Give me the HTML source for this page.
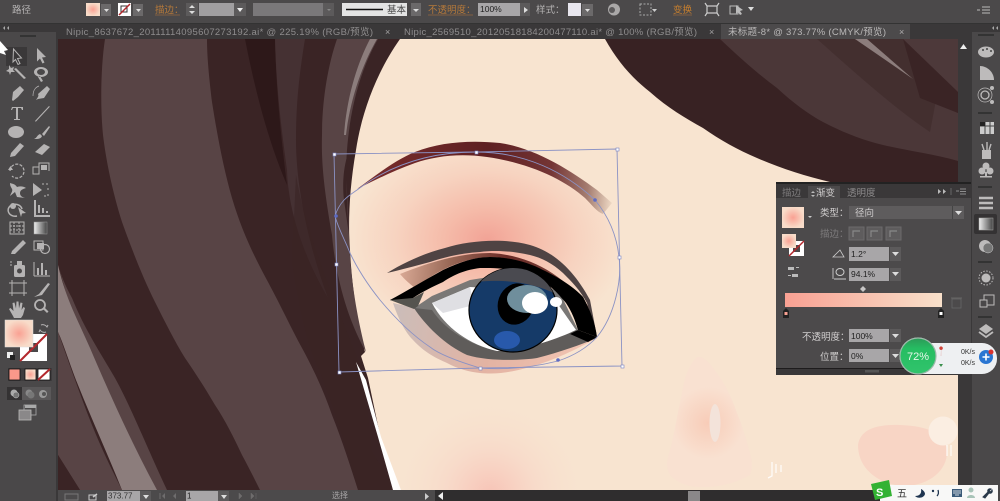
<!DOCTYPE html>
<html><head><meta charset="utf-8"><title>Illustrator</title>
<style>
html,body{margin:0;padding:0;width:1000px;height:501px;overflow:hidden;background:#4a4849}
svg{display:block;filter:blur(.35px);overflow:hidden}
text{font-family:"Liberation Sans","Noto Sans CJK SC",sans-serif}
</style></head><body>
<svg width="1000" height="501" viewBox="0 0 1000 501" xmlns="http://www.w3.org/2000/svg">
<defs>
<radialGradient id="blush" gradientUnits="userSpaceOnUse" cx="487" cy="240" r="140" gradientTransform="translate(487 240) scale(1 .75) translate(-487 -240)">
<stop offset="0" stop-color="#f2a396"/><stop offset=".3" stop-color="#f5bba9"/><stop offset=".65" stop-color="#f7d3c0"/><stop offset="1" stop-color="#f8e4d0"/></radialGradient>
<linearGradient id="brow" gradientUnits="userSpaceOnUse" x1="357" y1="180" x2="612" y2="205">
<stop offset="0" stop-color="#7a2d2c"/><stop offset=".5" stop-color="#5e2022"/><stop offset=".75" stop-color="#743535"/><stop offset=".9" stop-color="#a57d70"/><stop offset="1" stop-color="#efdac6"/></linearGradient>
<linearGradient id="crease" gradientUnits="userSpaceOnUse" x1="400" y1="270" x2="590" y2="290">
<stop offset="0" stop-color="#d9a995"/><stop offset=".25" stop-color="#9a6a58"/><stop offset=".55" stop-color="#6a2a26"/><stop offset="1" stop-color="#7c4a40"/></linearGradient>
<linearGradient id="under" gradientUnits="userSpaceOnUse" x1="395" y1="310" x2="590" y2="350">
<stop offset="0" stop-color="#cbbdb9"/><stop offset=".5" stop-color="#e3b3a3"/><stop offset="1" stop-color="#f2c4b2"/></linearGradient>
<radialGradient id="nose" gradientUnits="userSpaceOnUse" cx="708" cy="423" r="36"><stop offset="0" stop-color="#f8ccb8"/><stop offset="1" stop-color="#f9e1d1"/></radialGradient>
<radialGradient id="cheek" gradientUnits="userSpaceOnUse" cx="490" cy="495" r="100"><stop offset="0" stop-color="#f7c3b6"/><stop offset=".45" stop-color="#f8d8c8" stop-opacity=".8"/><stop offset="1" stop-color="#f8e4d0" stop-opacity="0"/></radialGradient>
<radialGradient id="sw"><stop offset="0" stop-color="#f9a193"/><stop offset="1" stop-color="#f8dcc9"/></radialGradient>
<linearGradient id="bar"><stop offset="0" stop-color="#f9a193"/><stop offset="1" stop-color="#f8e0ca"/></linearGradient>
<linearGradient id="gt"><stop offset="0" stop-color="#eee"/><stop offset="1" stop-color="#444"/></linearGradient>
<linearGradient id="green" x1="0" y1="0" x2="0" y2="1"><stop offset="0" stop-color="#2c9a58"/><stop offset=".3" stop-color="#26bd62"/><stop offset="1" stop-color="#31c46c"/></linearGradient>
<clipPath id="canvas"><rect x="58" y="39" width="900" height="451"/></clipPath>
<clipPath id="iris"><ellipse cx="513" cy="310" rx="44" ry="42"/></clipPath>
</defs>

<!-- CANVAS -->
<g clip-path="url(#canvas)">
<rect x="58" y="39" width="900" height="451" fill="#f8e4d0"/>
<path d="M335 216C340 200 350 195 357 190C390 165 430 152 476 152C525 152 565 172 595 200C610 218 617 238 619 257C622 280 615 315 597 337C585 350 570 357 558 361C530 368 505 370 480 368C460 362 440 355 430 347C412 335 395 318 380 300C368 285 358 270 350 253C345 240 338 228 335 216Z" fill="url(#blush)"/>
<!-- left hair -->
<path d="M58 39H400C378 70 362 110 356 150C349 190 348 225 350 250C352 290 358 325 365 352L361 356L368 378L380 435L393 490H58Z" fill="#3a2425"/>
<path d="M105 39H207C207 60 210 85 212 102C218 140 224 170 232 198C242 232 255 258 268 282C282 308 292 330 302 348C315 372 324 392 332 415C342 440 350 465 358 490H260C254 478 248 466 242 455C234 438 225 420 215 405C205 388 196 374 185 358C175 342 165 322 155 302C143 278 132 250 122 222C112 190 106 160 103 135C100 105 101 65 105 39Z" fill="#584445"/>
<path d="M58 265C62 278 66 287 72 298C85 330 100 352 115 378C130 405 146 445 167 490H157L122 490Z" fill="#584445"/>
<path d="M58 265C66 300 78 320 90 348C108 390 130 440 157 490H122C108 455 92 420 78 385C70 365 64 345 58 332Z" fill="#8c7d7c"/>
<path d="M58 332C68 360 80 395 92 425C102 450 112 470 122 490H80L58 455Z" fill="#584445"/>
<path d="M58 455L80 490H58Z" fill="#3a2425"/>
<path d="M245 39H275C276 85 280 130 287 185C272 150 258 105 245 39Z" fill="#2d1819"/>
<path d="M275 39H305C300 70 296 100 296 140C296 190 310 250 328 298C300 250 288 205 287 170C280 120 276 80 275 39Z" fill="#453133"/>
<path d="M337 39H378C360 70 350 110 347 150C345 175 348 200 349 235C350 280 358 320 365 348L366 352C345 315 335 270 332 235C325 195 321 165 322 135C322 100 328 65 337 39Z" fill="#584445"/>
<path d="M377 39L370 39C358 62 347 95 344 135L346 135C350 100 362 65 377 39Z" fill="#8c7d7c"/>
<path d="M349 150C345 175 347 205 349 235L344 200C342 180 344 165 349 150Z" fill="#3a2425"/>
<path d="M296 175C305 230 330 290 362 370L372 452L396 490H358C345 440 330 395 315 360C305 335 298 300 292 260Z" fill="#3a2425" opacity=".6"/>
<path d="M356 362L366 380L381 437L401 490H393L378 437Z" fill="#fff"/>
<!-- upper right hair -->
<path d="M605 39C618 62 632 78 650 92C668 108 685 118 703 128C720 140 738 150 757 158C780 168 805 176 830 182L958 190V39Z" fill="#382223"/>
<path d="M720 39C740 58 757 73 777 88C792 102 808 114 823 122C842 132 862 140 883 145C908 151 934 154 958 161V39Z" fill="#4b3738"/>
<path d="M817 39C850 68 890 105 930 132L936 100L903 39Z" fill="#432f2f"/>
<path d="M903 39H958V92Z" fill="#4d393a"/>
<path d="M903 39L920 98L958 113V92Z" fill="#3a2425"/>
<path d="M855 39H867L913 79Z" fill="#8c7d7c"/>
<!-- brow -->
<path d="M357 189C375 176 395 160 415 152C440 142 470 140 500 143C535 148 570 170 597 190L612 203L603 214C597 212 592 205 585 198C565 180 530 163 487 157C460 153 435 156 415 163C395 170 375 180 357 189Z" fill="url(#brow)"/>
<!-- eye -->
<path d="M393 303C398 318 405 332 413 340C425 353 436 358 447 363C458 369 470 372 480 373C500 375 515 371 530 367C555 360 575 350 597 338L500 345L415 308Z" fill="url(#under)"/>
<path d="M400 274C430 262 460 253 490 253C530 255 565 275 590 310L583 297C560 275 520 257 490 257C465 258 440 268 415 288C410 284 405 280 400 274Z" fill="url(#crease)"/>
<path d="M387 273C405 262 425 253 445 248C470 240 505 238 530 245C555 252 575 272 590 300L597 337L587 303C580 290 572 282 563 273C552 263 542 258 530 255C512 251 495 250 480 252C462 253 445 257 430 262C415 266 400 270 387 273Z" fill="#4f4343"/>
<path d="M414 308L432 296L470 280L520 272L560 293L578 330C555 345 525 357 497 358C460 352 430 330 414 308Z" fill="#7a7876"/>
<path d="M414 308C425 325 445 345 467 355C490 362 525 360 537 358C560 352 580 345 597 338L575 330C555 340 525 350 497 351C470 345 445 330 432 310Z" fill="#5f5c5a"/>
<path d="M432 303L470 287L520 290L553 297L576 330C555 340 525 350 497 351C470 345 445 328 432 303Z" fill="#fff"/>
<path d="M432 303L470 287L474 305L443 313Z" fill="#dfdfe3"/>
<path d="M390 300C405 292 425 280 443 270C460 262 475 257 490 257C510 257 530 263 543 270C560 278 575 288 583 297C590 310 595 322 597 337L578 330C575 320 572 312 566 303C560 296 555 290 548 285C538 278 528 273 515 270C500 268 490 268 480 268C465 270 455 274 443 282C432 287 422 292 413 298L414 306Z" fill="#000"/>
<path d="M390 300L413 298L424 292L418 306L414 309Z" fill="#55544f"/>
<path d="M578 330L597 337L588 342L570 334Z" fill="#000"/>
<ellipse cx="513" cy="310" rx="44" ry="42" fill="#153a68" stroke="#000" stroke-width="1.200"/>
<g clip-path="url(#iris)">
<path d="M460 284C495 278 530 280 560 296V260H460Z" fill="#4a4a50"/>
<ellipse cx="507" cy="340" rx="13" ry="9" fill="#2859ab"/>
</g>
<ellipse cx="516" cy="304" rx="18" ry="21" transform="rotate(20 516 304)" fill="#000"/>
<ellipse cx="527" cy="299" rx="20" ry="14" fill="#6f8e9c"/>
<ellipse cx="535" cy="303" rx="13" ry="11" fill="#fff"/>
<ellipse cx="556" cy="302" rx="6" ry="5" fill="#fff"/>
<!-- nose / cheeks -->
<rect x="390" y="395" width="200" height="95" fill="url(#cheek)"/>
<path d="M697 357C688 365 684 380 682 393C678 410 676 425 673 437C671 448 668 455 667 463C667 470 669 475 673 478C680 484 690 487 700 487C720 488 738 482 750 475C753 468 752 460 750 453C746 438 742 425 737 413C732 398 725 384 717 373C710 363 703 355 697 357Z" fill="url(#nose)"/>
<ellipse cx="715" cy="423" rx="5.500" ry="19" fill="#f3e3da"/>
<path d="M858 445C860 430 875 424 900 425C925 426 945 432 947 450C948 470 930 485 905 486C880 485 858 470 858 445Z" fill="#f8d5c5"/>
<circle cx="943" cy="431" r="14.500" fill="#fbeee2"/>
<path d="M772 462V476L768 478M776 464V473M781 465V472" stroke="#fff" stroke-width="1.300" fill="none" opacity=".85"/>
<path d="M947 445V456M951 445V456" stroke="#fff" stroke-width="1.300" opacity=".8"/>
<!-- selection -->
<g fill="none" stroke="#8b92c4" stroke-width=".9">
<path d="M334 154L476 152L617 149L622 366L480 368L339 372Z"/>
<path d="M335 216C340 200 350 195 357 190C390 165 430 152 476 152C525 152 565 172 595 200C610 218 617 238 619 257C622 280 615 315 597 337C585 350 570 357 558 361C530 368 505 370 480 368C460 362 440 355 430 347C412 335 395 318 380 300C368 285 358 270 350 253C345 240 338 228 335 216Z"/>
</g>
<g fill="#fff" stroke="#7a82c0" stroke-width=".6">
<rect x="333" y="153" width="3" height="3"/><rect x="475" y="151" width="3" height="3"/><rect x="616" y="148" width="3" height="3"/><rect x="335" y="263" width="3" height="3"/><rect x="618" y="256" width="3" height="3"/><rect x="338" y="371" width="3" height="3"/><rect x="479" y="367" width="3" height="3"/><rect x="621" y="365" width="3" height="3"/>
</g>
<circle cx="336" cy="216" r="1.800" fill="#5d6bc4"/><circle cx="595" cy="200" r="1.800" fill="#5d6bc4"/><circle cx="558" cy="360" r="1.800" fill="#5d6bc4"/>
</g>

<!-- TOP BAR -->
<rect x="0" y="0" width="1000" height="23" fill="#4b494a"/>
<rect x="0" y="23" width="1000" height="16" fill="#3a3839"/>
<rect x="0" y="23" width="1000" height="1" fill="#333"/>
<text x="12" y="13" font-size="9.500" fill="#b5b3b3">路径</text>
<rect x="86" y="3" width="14" height="13" fill="url(#sw)"/>
<rect x="101" y="4" width="10" height="12" fill="#6b696a"/><path d="M104 9h5l-2.500 3z" fill="#ddd"/>
<rect x="118" y="3" width="13" height="13" fill="#fff"/><rect x="121" y="6" width="6" height="6" fill="none" stroke="#333"/><path d="M119 15L130 4" stroke="#b3282d" stroke-width="1.500"/>
<rect x="133" y="4" width="10" height="12" fill="#6b696a"/><path d="M136 9h5l-2.500 3z" fill="#ddd"/>
<text x="155" y="13" font-size="9.500" fill="#b5793a">描边：</text><path d="M155 15H180" stroke="#b5793a" stroke-width=".6"/>
<rect x="186" y="3" width="12" height="13" fill="#5c5a5b"/><path d="M189 8h6l-3-3zM189 11h6l-3 3z" fill="#ddd"/>
<rect x="199" y="3" width="35" height="13" fill="#a09ea0"/><rect x="234" y="3" width="12" height="13" fill="#5c5a5b"/><path d="M237 8h6l-3 4z" fill="#eee"/>
<rect x="253" y="3" width="70" height="13" fill="#7a787a"/><rect x="323" y="3" width="11" height="13" fill="#5c5a5b"/><path d="M327 9h4l-2 2z" fill="#888"/>
<rect x="342" y="3" width="65" height="13" fill="#e4e4e4"/><path d="M346 9.500H383" stroke="#111" stroke-width="1.600"/><text x="387" y="13" font-size="9.500" fill="#444">基本</text>
<rect x="411" y="3" width="10" height="13" fill="#6b696a"/><path d="M413 9h6l-3 3z" fill="#ddd"/>
<text x="428" y="13" font-size="9.500" fill="#b5793a">不透明度：</text><path d="M428 15H473" stroke="#b5793a" stroke-width=".6"/>
<rect x="478" y="3" width="42" height="13" fill="#a8a6a8"/><text x="480" y="12" font-size="8.500" fill="#222">100%</text>
<rect x="520" y="3" width="10" height="13" fill="#5c5a5b"/><path d="M524 7l4 3-4 3z" fill="#ddd"/>
<text x="536" y="13" font-size="9.500" fill="#b5b3b3">样式：</text>
<rect x="568" y="3" width="13" height="13" fill="#e8e6ee"/><rect x="582" y="4" width="11" height="12" fill="#6b696a"/><path d="M585 9h5l-2.500 3z" fill="#ddd"/>
<circle cx="614" cy="9.500" r="6" fill="#aaa8a8"/><circle cx="612" cy="10" r="3" fill="#5c5a5b"/>
<rect x="640" y="4" width="11" height="11" fill="none" stroke="#aaa" stroke-dasharray="2 1.500"/><path d="M652 9h5l-2.500 3z" fill="#ccc"/>
<text x="673" y="13" font-size="9.500" fill="#c77f2e">变换</text><path d="M673 15H692" stroke="#b5793a" stroke-width=".6"/>
<path d="M707 6L717 6M707 13L717 13M707 6L705 3M717 6L719 3M707 13L705 16M717 13L719 16M707 6V13M717 6V13" stroke="#ccc" stroke-width="1.200" fill="none"/>
<rect x="730" y="6" width="8" height="8" fill="none" stroke="#bbb"/><path d="M736 5l7 5-3 1 2 3-2 1-2-3-2 2z" fill="#bbb"/><path d="M748 7h6l-3 4z" fill="#ddd"/>
<path d="M977 10h3M982 7h8M982 10h8M982 13h8" stroke="#bbb" stroke-width=".9"/>

<!-- TABS -->
<text x="66" y="35" font-size="9.500" fill="#8e8c8d" textLength="307">Nipic_8637672_20111114095607273192.ai* @ 225.19% (RGB/预览)</text>
<text x="385" y="35" font-size="9" fill="#a5a3a4">×</text>
<text x="404" y="35" font-size="9.500" fill="#8e8c8d" textLength="293">Nipic_2569510_20120518184200477110.ai* @ 100% (RGB/预览)</text>
<text x="709" y="35" font-size="9" fill="#a5a3a4">×</text>
<rect x="721" y="24" width="189" height="15" fill="#4c4a4b"/>
<text x="728" y="35" font-size="9.500" fill="#b9b7b7" textLength="158">未标题-8* @ 373.77% (CMYK/预览)</text>
<text x="899" y="35" font-size="9" fill="#b0aeae">×</text>

<!-- LEFT TOOLBAR -->
<rect x="0" y="24" width="58" height="8" fill="#3a3839"/>
<rect x="0" y="32" width="56" height="458" fill="#4a4849"/>
<rect x="56" y="32" width="2" height="469" fill="#3a3839"/>
<rect x="0" y="490" width="56" height="11" fill="#4a4849"/>
<path d="M3 28l2-2v4zM7 28l2-2v4z" fill="#aaa"/>
<rect x="20" y="35" width="16" height="2" fill="#333"/>
<rect x="6" y="47" width="21" height="19" fill="#3a3839"/>
<g fill="#b5b3b3">
<path d="M13.500 49l8 9-4 .5 2.500 5-2 1-2.500-5-2.500 2.500z" fill="none" stroke="#b5b3b3"/>
<path d="M37 48l9 9-4 .5 2.500 5-2 1-2.500-5-3 3z"/>
<path d="M24 79L14 69l2-1 10 10zM9 65l2 3 3-1-1 3 2 2-4 0-1 3-1-3-3-1 3-2z"/>
<path fill-rule="evenodd" d="M34 72a7 5 0 1 1 14 0a7 5 0 1 1-14 0zM37 72a4 3 0 1 0 8 0a4 3 0 1 0-8 0zM40 76l3 5-2 1-3-5z"/>
<path d="M12 100l1-8 7-6 4 4-6 7-5 4z"/>
<path d="M36 100c2-3 3-4 2-6l9-8 3 3-6 9-6 1z"/><path d="M33 96c0-6 3-9 6-10" fill="none" stroke="#b5b3b3" stroke-width=".7"/>
<path d="M12 107h11v3h-1l-1-2h-3v11h2v1h-6v-1h2v-11h-3l-1 2h-1z"/>
<path d="M35 121l14-15 .8.8-14 15z"/>
<ellipse cx="16" cy="132" rx="8" ry="6"/>
<path d="M34 139c3-1 3-4 6-5l2 2c-1 3-4 3-8 3zM42 134l7-8 1 1-6 9z"/>
<path d="M10 157l1-4 9-10 4 3-9 10z"/>
<path d="M35 152l9-8 6 3-8 8z"/>
<path d="M10 171a7 7 0 1 1 2 5" fill="none" stroke="#b5b3b3" stroke-width="1.200" stroke-dasharray="3 1.500"/>
<path d="M8 170h5l-2.500-4z"/>
<path d="M33 174V167h6v7zM39 172v-9h10v8" fill="none" stroke="#b5b3b3"/><rect x="41" y="165" width="6" height="5"/>
<path d="M10 183c3 1 5 1 7 4 3-1 6-1 9 1-3 1-6 2-6 5 0 3 2 4 5 5l-8-1-2-5-5 4c1-3 3-5 2-7-1-2-2-3-2-6z"/>
<path d="M33 183l9 7-9 6z"/><path d="M42 184h2M46 184h2M48 188v2M48 194v2M46 196h-2" stroke="#b5b3b3" fill="none"/>
<path d="M22 209a7 6 0 1 0-5 7" fill="none" stroke="#b5b3b3" stroke-width="1.500"/><circle cx="13" cy="206" r="3"/><path d="M18 207l8 6-4 .5-1 3.500z"/>
<path d="M34 200h2v15h14v2H34zM38 205h2v8h-2zM42 208h2v5h-2zM46 211h2v2h-2z"/>
<rect x="10" y="222" width="14" height="12" fill="none" stroke="#b5b3b3"/><path d="M10 226h14M10 230h14M14 222v12M19 222v12" stroke="#b5b3b3" stroke-dasharray="2 1"/>
<rect x="34" y="222" width="13" height="12" fill="url(#gt)" stroke="#999" stroke-width=".5"/>
<path d="M11 254l1-3 8-8 3 3-8 8zM20 243l3-3 3 3-3 3z"/>
<rect x="34" y="241" width="9" height="9" fill="none" stroke="#b5b3b3"/><circle cx="45" cy="249" r="4.500" fill="none" stroke="#b5b3b3" stroke-width="1.200"/><rect x="37" y="243" width="7" height="6"/>
<rect x="14" y="265" width="11" height="12" rx="1.500"/><rect x="17" y="261" width="5" height="4"/><circle cx="19.500" cy="271" r="2.500" fill="#4a4849"/><path d="M10 262h2M10 265h2" stroke="#b5b3b3"/>
<path d="M34 276V262M34 276H50" fill="none" stroke="#b5b3b3"/><path d="M37 268h2v7h-2zM41 263h2v12h-2zM45 270h2v5h-2z"/>
<path d="M9 283H27M12 280V296M24 280V296M9 293H27" stroke="#b5b3b3" fill="none"/>
<path d="M34 297l5-3 9-11 2 1-8 11z"/>
<path d="M13 316l-4-7 1.500-1 3 3-1-8 2-.5 1.500 6 .5-7h2l.5 7 1.500-6 2 .5-1 7 2-3 1.500 1-2 7-2 3h-7z"/>
<circle cx="40" cy="305" r="5" fill="none" stroke="#b5b3b3" stroke-width="1.800"/><path d="M43 309l4 4 1.500-1.500-4-4z"/>
<path d="M41 325a5 5 0 0 1 6 2l1-2M46 332a5 5 0 0 1-6-2l-1 2" fill="none" stroke="#b5b3b3"/>
</g>
<rect x="20" y="334" width="27" height="27" fill="#fff"/>
<rect x="29" y="343" width="9" height="9" fill="#4a4849"/>
<path d="M20 361L47 334" stroke="#b3282d" stroke-width="2"/>
<rect x="5" y="320" width="28" height="27" fill="url(#sw)" stroke="#ddd" stroke-width=".5"/>
<rect x="7" y="352" width="6" height="6" fill="#eee"/><rect x="10" y="355" width="5" height="5" fill="#222"/>
<rect x="8" y="368" width="44" height="13" fill="#3e3c3d"/>
<rect x="9" y="369" width="11" height="11" fill="#f9988a" stroke="#111" stroke-width=".8"/>
<rect x="25" y="369" width="11" height="11" fill="url(#sw)" stroke="#111" stroke-width=".8"/>
<rect x="38" y="369" width="12" height="11" fill="#fff" stroke="#111" stroke-width=".8"/><path d="M38 380L50 369" stroke="#b3282d" stroke-width="2"/>
<rect x="7" y="387" width="44" height="13" fill="#5a5859"/><rect x="7" y="387" width="15" height="13" fill="#343233"/>
<circle cx="14" cy="393" r="3.500" fill="#aaa"/><circle cx="16" cy="395" r="3" fill="#777" stroke="#ccc" stroke-width=".5"/>
<circle cx="29" cy="393" r="3.500" fill="#888"/><circle cx="31" cy="395" r="3.500" fill="#777"/>
<circle cx="43" cy="394" r="4" fill="#999"/><circle cx="44" cy="394" r="2" fill="#555"/>
<rect x="24" y="405" width="12" height="10" fill="#4a4849" stroke="#aaa" stroke-width=".8"/>
<rect x="19" y="410" width="12" height="10" fill="#8a8889" stroke="#bbb" stroke-width=".8"/>
<rect x="25" y="405" width="11" height="3" fill="#aaa"/>
<!-- white cursor -->
<path d="M0 41L8 50L4 51L6 55L0 53Z" fill="#fff"/>

<!-- RIGHT SCROLL + DOCK -->
<rect x="958" y="39" width="14" height="462" fill="#3a3839"/>
<path d="M960 49h7l-3.500-5z" fill="#eee"/>
<rect x="972" y="32" width="28" height="469" fill="#4a4849"/>
<rect x="972" y="24" width="28" height="8" fill="#3a3839"/>
<path d="M992 28l2-2v4zM996 28l2-2v4z" fill="#aaa"/>
<rect x="978" y="34" width="16" height="2" fill="#333"/>
<g fill="#bdbbbb">
<ellipse cx="986" cy="52" rx="8" ry="5.500"/><circle cx="983" cy="50" r="1" fill="#444"/><circle cx="987" cy="49" r="1" fill="#444"/><circle cx="991" cy="51" r="1" fill="#444"/>
<path d="M980 66c7 0 14 6 14 14H980z"/>
<circle cx="985" cy="95" r="4" fill="none" stroke="#bdbbbb" stroke-width="1.300"/><circle cx="985" cy="95" r="7" fill="none" stroke="#bdbbbb" stroke-width=".7"/><circle cx="992" cy="88" r="2"/><circle cx="992" cy="102" r="2"/>
<rect x="978" y="112" width="14" height="2" fill="#333"/>
<rect x="980" y="122" width="14" height="12" fill="#ccc"/><path d="M980 126h14M985 122v12M990 122v12" stroke="#444"/><rect x="980" y="122" width="5" height="4" fill="#222"/>
<rect x="982" y="150" width="9" height="9"/><path d="M984 150l-2-6M987 150v-8M989 150l2-6" stroke="#bdbbbb" stroke-width="1.400"/>
<circle cx="986" cy="166" r="3.500"/><circle cx="982" cy="171" r="3.500"/><circle cx="990" cy="171" r="3.500"/><rect x="985" y="172" width="2" height="5"/><rect x="980" y="176" width="12" height="1.500"/>
<rect x="978" y="186" width="14" height="2" fill="#333"/>
</g>
<path d="M979 198h14M979 203h14M979 208h14" stroke="#bdbbbb" stroke-width="2.500"/>
<rect x="974" y="214" width="23" height="20" rx="2" fill="#343233"/>
<rect x="979" y="218" width="14" height="12" fill="url(#gt)" stroke="#aaa" stroke-width=".5"/>
<circle cx="985" cy="246" r="6" fill="#bdbbbb"/><circle cx="988" cy="248" r="5" fill="#777" stroke="#ccc" stroke-width=".5"/>
<rect x="978" y="261" width="14" height="2" fill="#333"/>
<circle cx="986" cy="278" r="4.500" fill="#bdbbbb"/><circle cx="986" cy="278" r="7" fill="none" stroke="#bdbbbb" stroke-dasharray="1.500 1.500"/>
<rect x="984" y="295" width="10" height="10" fill="none" stroke="#bdbbbb"/><rect x="980" y="300" width="7" height="7" fill="#4a4849" stroke="#bdbbbb"/>
<rect x="978" y="316" width="14" height="2" fill="#333"/>
<path d="M986 324l7 5-7 5-7-5z" fill="#bdbbbb"/><path d="M979 332l7 5 7-5" fill="none" stroke="#bdbbbb" stroke-width="1.800"/>

<!-- GRADIENT PANEL -->
<rect x="776" y="182" width="195" height="193" fill="#4c4a4b"/>
<rect x="776" y="182" width="195" height="16" fill="#3a3839"/>
<rect x="776" y="182" width="195" height="2" fill="#222"/>
<rect x="808" y="186" width="32" height="12" fill="#4c4a4b"/>
<rect x="776" y="368" width="195" height="7" fill="#3a3839"/><rect x="776" y="368" width="195" height="1" fill="#1e1c1d"/>
<text x="782" y="196" font-size="9.500" fill="#7d7b7c">描边</text>
<path d="M813 191l-2 2h4zM813 197l-2-2h4z" fill="#bbb"/>
<text x="816" y="196" font-size="9.500" fill="#cfcdcd">渐变</text>
<text x="847" y="196" font-size="9.500" fill="#8c8a8b">透明度</text>
<path d="M938 189l3 2.500-3 2.500zM943 189l3 2.500-3 2.500z" fill="#bbb"/><path d="M951 188v7" stroke="#666"/>
<path d="M956 191h3M960 189h6M960 191.500h6M960 194h6" stroke="#aaa" stroke-width=".8"/>
<rect x="782" y="207" width="22" height="21" fill="url(#sw)"/>
<path d="M808 216h4l-2 2z" fill="#ccc"/>
<text x="820" y="216" font-size="9.500" fill="#d0cece">类型：</text>
<rect x="849" y="206" width="115" height="13" fill="#5e5c5d"/><rect x="952" y="206" width="1" height="13" fill="#444"/><path d="M955 211h7l-3.500 4z" fill="#ddd"/>
<text x="855" y="216" font-size="9.500" fill="#d0cece">径向</text>
<rect x="789" y="241" width="15" height="15" fill="#fff"/><rect x="793" y="245" width="7" height="7" fill="#4c4a4b"/><path d="M789 256L804 241" stroke="#b3282d" stroke-width="1.500"/>
<rect x="782" y="234" width="14" height="14" fill="url(#sw)"/>
<text x="820" y="237" font-size="9.500" fill="#7c7a7b">描边：</text>
<g fill="#5e5c5d" stroke="#6c6a6b"><rect x="849" y="227" width="15" height="13"/><rect x="867" y="227" width="15" height="13"/><rect x="886" y="227" width="15" height="13"/></g>
<path d="M853 237V231H860M871 237V231H878M890 237V231H897" stroke="#888" fill="none" stroke-width="1.200"/>
<path d="M833 257H844L840 250Z" fill="none" stroke="#ccc" stroke-width=".8"/>
<rect x="849" y="247" width="40" height="14" fill="#a8a6a8"/><text x="851" y="257" font-size="8.500" fill="#222">1.2°</text>
<rect x="890" y="247" width="11" height="14" fill="#5c5a5b"/><path d="M892 252h7l-3.500 4z" fill="#ddd"/>
<ellipse cx="840" cy="272" rx="4" ry="3.500" fill="none" stroke="#ccc"/><path d="M834 279h12M833 268v11" stroke="#ccc" stroke-width=".9"/>
<rect x="849" y="268" width="40" height="13" fill="#a8a6a8"/><text x="851" y="277" font-size="8.500" fill="#222">94.1%</text>
<rect x="890" y="268" width="11" height="13" fill="#5c5a5b"/><path d="M892 272h7l-3.500 4z" fill="#ddd"/>
<g fill="#bbb"><rect x="788" y="267" width="6" height="3"/><rect x="796" y="267" width="3" height="1"/><rect x="792" y="274" width="6" height="3"/><rect x="788" y="275" width="3" height="1"/></g>
<path d="M863 286l3 3-3 3-3-3z" fill="#c8c6c6"/>
<rect x="785" y="293" width="157" height="14" fill="url(#bar)"/>
<rect x="952" y="299" width="9" height="9" fill="none" stroke="#666" stroke-width=".8"/><path d="M951 298h11" stroke="#666"/>
<path d="M786 308l3 3v7h-6v-7z" fill="#222"/><rect x="784.500" y="312" width="3" height="3" fill="#f9a193"/>
<path d="M941 308l3 3v7h-6v-7z" fill="#222"/><rect x="939.500" y="312" width="3" height="3" fill="#fff"/>
<text x="802" y="340" font-size="9.500" fill="#d0cece">不透明度：</text>
<rect x="849" y="329" width="40" height="13" fill="#a8a6a8"/><text x="851" y="339" font-size="8.500" fill="#222">100%</text>
<rect x="890" y="329" width="11" height="13" fill="#5c5a5b"/><path d="M892 334h7l-3.500 4z" fill="#ddd"/>
<text x="820" y="360" font-size="9.500" fill="#d0cece">位置：</text>
<rect x="849" y="349" width="40" height="13" fill="#a8a6a8"/><text x="851" y="359" font-size="8.500" fill="#222">0%</text>
<rect x="890" y="349" width="11" height="13" fill="#5c5a5b"/><path d="M892 354h7l-3.500 4z" fill="#ddd"/>
<rect x="865" y="370" width="14" height="2.500" fill="#555"/>

<!-- NET WIDGET -->
<rect x="906" y="343" width="91" height="31" rx="15" fill="#eef0f2"/>
<circle cx="918" cy="356" r="18.500" fill="#fff"/><circle cx="918" cy="356" r="18" fill="url(#green)" stroke="#9bb9a9" stroke-width="1.200"/>
<text x="918" y="360" font-size="11" fill="#e6f7ea" text-anchor="middle">72%</text>
<path d="M941 350a1.800 1.800 0 1 1 .1 0V356h-.2z" fill="#d0433a"/><path d="M941 360v4h-2l2 3 2-3h-2z" fill="#3a8f4d"/>
<text x="961" y="354" font-size="7" fill="#333">0K/s</text><text x="961" y="365" font-size="7" fill="#333">0K/s</text>
<circle cx="986" cy="357" r="7" fill="#2a76d2"/><path d="M982.500 357h7M986 353.500v7" stroke="#fff" stroke-width="1.600"/><circle cx="991" cy="352" r="2.500" fill="#d9322e"/>

<!-- STATUS BAR -->
<rect x="58" y="490" width="377" height="11" fill="#4c4a4b"/>
<rect x="435" y="490" width="523" height="11" fill="#2f2d2e"/>
<rect x="688" y="491" width="12" height="10" fill="#8a8889"/>
<rect x="65" y="494" width="13" height="6" fill="none" stroke="#777"/>
<rect x="89" y="495" width="7" height="5" fill="none" stroke="#ccc"/><path d="M93 497l4-3" stroke="#ccc" stroke-width="1.500"/>
<rect x="107" y="491" width="33" height="10" fill="#a8a6a8"/><text x="108" y="498.500" font-size="8" fill="#333">373.77</text>
<rect x="140" y="491" width="11" height="10" fill="#5c5a5b"/><path d="M143 495h6l-3 4z" fill="#ddd"/>
<path d="M165 493l-3 3 3 3zM176 493l-3 3 3 3z" fill="#6e6c6d"/><path d="M160 493v6" stroke="#6e6c6d"/>
<rect x="186" y="491" width="32" height="10" fill="#a8a6a8"/><text x="187" y="498.500" font-size="8" fill="#222">1</text>
<rect x="218" y="491" width="11" height="10" fill="#5c5a5b"/><path d="M221 495h6l-3 4z" fill="#ddd"/>
<path d="M239 493l3 3-3 3zM251 493l3 3-3 3zM256 493v6" fill="#6e6c6d" stroke="#6e6c6d" stroke-width=".5"/>
<text x="332" y="498" font-size="8" fill="#a9a7a8">选择</text>
<path d="M425 493l4 3.500-4 3.500z" fill="#ccc"/><path d="M443 492l-5 4 5 4z" fill="#eee"/>

<!-- IME BAR -->
<rect x="880" y="485" width="118" height="16" fill="#f8f8f7"/>
<path d="M871 484L889 480L892 496L875 500Z" fill="#33b233"/>
<text x="876" y="496" font-size="11" font-weight="bold" fill="#fff">S</text>
<text x="897" y="497" font-size="10" fill="#333">五</text>
<path d="M921 489c1 5-2 7-6 7 3 3 9 2 10-2 0-2-2-4-4-5z" fill="#1f3550"/>
<circle cx="933" cy="491" r="1.200" fill="#1f3550"/><path d="M938 490c1 3 0 5-1 6" stroke="#1f3550" stroke-width="1.300" fill="none"/>
<rect x="952" y="489" width="10" height="8" fill="#3a5a78"/><path d="M953 491h8M953 493h8M955 495h4" stroke="#fff" stroke-width=".7"/>
<circle cx="971" cy="490" r="2.500" fill="#a8c4b8"/><path d="M967 498c0-4 8-4 8 0z" fill="#a8c4b8"/>
<path d="M983 497l5-5c-1-2 1-4 3-3l-2 2 2 1 1-2c1 2-1 4-3 3l-4 5z" fill="#2b3a4a" stroke="#2b3a4a"/>
</svg>
</body></html>
